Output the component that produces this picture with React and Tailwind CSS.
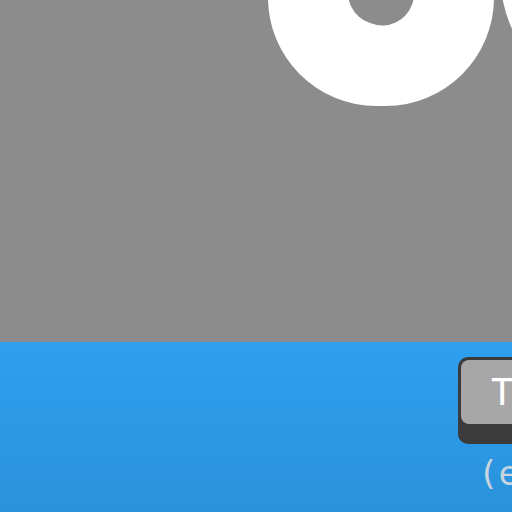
export default function App() {
  return (
    <div className="flex h-[512px] w-[512px] flex-col overflow-hidden">
      {/* artwork area */}
      <div className="relative h-[342px] shrink-0 overflow-hidden bg-[#8c8c8c]">
        <div className="absolute left-[268px] top-[-120px] h-[226px] w-[226px] rounded-[50%_50%_48%_48%] bg-white">
          <div className="absolute left-[80px] top-[82px] h-[63px] w-[66px] rotate-[20deg] rounded-full bg-[#8c8c8c]" />
        </div>
        <div className="absolute left-[501px] top-[-133px] h-[226px] w-[226px] rounded-full bg-white" />
      </div>

      {/* controls */}
      <div className="flex flex-1 flex-col items-end overflow-hidden bg-gradient-to-b from-[#2f9ff0] to-[#2a92dc] pt-[15px]">
        <div className="mr-[-46px] w-[100px] rounded-[10px] bg-[#3b3b3b] p-[3px] pb-[20px]">
          <div className="flex h-[64px] items-center rounded-[8px] bg-[#a7a7a7] pl-[30px] font-['DejaVu_Sans_Mono',monospace] text-[37px] leading-none text-white">
            T
          </div>
        </div>
        <div className="mr-[-38px] mt-[12px] w-[72px] font-['DejaVu_Sans_Mono',monospace] text-[34px] leading-none text-[#c9d5de]">
          (esc)
        </div>
      </div>
    </div>
  );
}
